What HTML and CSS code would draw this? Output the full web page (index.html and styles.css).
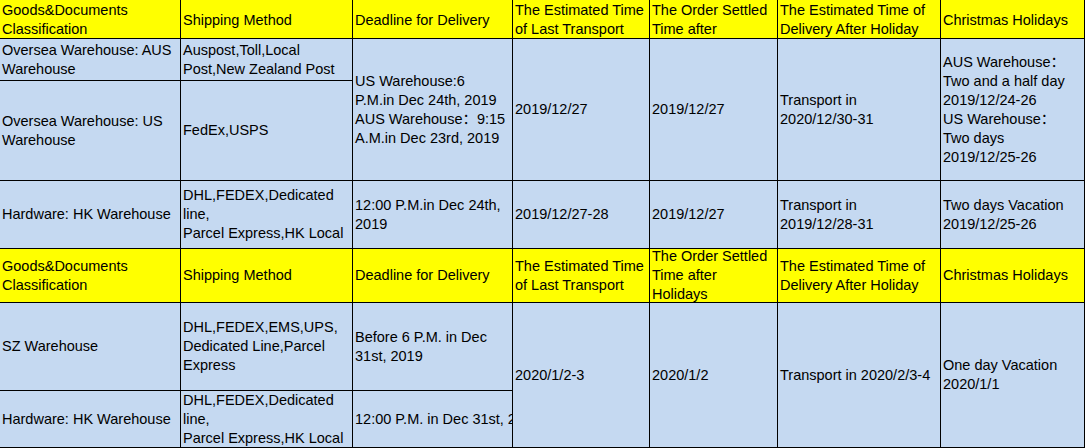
FILE: index.html
```html
<!DOCTYPE html>
<html lang="en">
<head>
  <meta charset="UTF-8">
  <title>Christmas Holiday Shipping Schedule</title>
  <link rel="stylesheet" href="styles.css">
</head>
<body>
  <div class="sheet">
    <!-- header 1 -->
    <div class="cell head first">Goods&amp;Documents<br>Classification</div>
    <div class="cell head first">Shipping Method</div>
    <div class="cell head first">Deadline for Delivery</div>
    <div class="cell head first">The Estimated Time<br>of Last Transport</div>
    <div class="cell head first">The Order Settled<br>Time after</div>
    <div class="cell head first">The Estimated Time of<br>Delivery After Holiday</div>
    <div class="cell head first">Christmas Holidays</div>

    <!-- overseas warehouses -->
    <div class="cell">Oversea Warehouse: AUS<br>Warehouse</div>
    <div class="cell">Auspost,Toll,Local<br>Post,New Zealand Post</div>
    <div class="cell span2">US Warehouse:6<br>P.M.in Dec 24th, 2019<br>AUS Warehouse：9:15<br>A.M.in Dec 23rd, 2019</div>
    <div class="cell span2">2019/12/27</div>
    <div class="cell span2">2019/12/27</div>
    <div class="cell span2">Transport in<br>2020/12/30-31</div>
    <div class="cell span2">AUS Warehouse：<br>Two and a half day<br>2019/12/24-26<br>US Warehouse：<br>Two days<br>2019/12/25-26</div>
    <div class="cell">Oversea Warehouse: US<br>Warehouse</div>
    <div class="cell">FedEx,USPS</div>

    <!-- hk -->
    <div class="cell">Hardware: HK Warehouse</div>
    <div class="cell">DHL,FEDEX,Dedicated<br>line,<br>Parcel Express,HK Local</div>
    <div class="cell">12:00 P.M.in Dec 24th,<br>2019</div>
    <div class="cell">2019/12/27-28</div>
    <div class="cell">2019/12/27</div>
    <div class="cell">Transport in<br>2019/12/28-31</div>
    <div class="cell">Two days Vacation<br>2019/12/25-26</div>

    <!-- header 2 -->
    <div class="cell head">Goods&amp;Documents<br>Classification</div>
    <div class="cell head">Shipping Method</div>
    <div class="cell head">Deadline for Delivery</div>
    <div class="cell head">The Estimated Time<br>of Last Transport</div>
    <div class="cell head">The Order Settled<br>Time after<br>Holidays</div>
    <div class="cell head">The Estimated Time of<br>Delivery After Holiday</div>
    <div class="cell head">Christmas Holidays</div>

    <!-- new year -->
    <div class="cell">SZ Warehouse</div>
    <div class="cell">DHL,FEDEX,EMS,UPS,<br>Dedicated Line,Parcel<br>Express</div>
    <div class="cell">Before 6 P.M. in Dec<br>31st, 2019</div>
    <div class="cell span2">2020/1/2-3</div>
    <div class="cell span2">2020/1/2</div>
    <div class="cell span2">Transport in 2020/2/3-4</div>
    <div class="cell span2">One day Vacation<br>2020/1/1</div>
    <div class="cell">Hardware: HK Warehouse</div>
    <div class="cell">DHL,FEDEX,Dedicated<br>line,<br>Parcel Express,HK Local</div>
    <div class="cell">12:00 P.M. in Dec 31st, 2019</div>
  </div>
</body>
</html>
```

FILE: styles.css
```css
body {
  margin: 0;
  font-family: 'Liberation Sans', Arial, 'Noto Sans CJK SC', sans-serif;
  font-size: 14.5px;
  line-height: 19px;
  color: #000;
  background-color: #fff;
}

.sheet {
  display: grid;
  grid-template-columns: 180px 171px 159px 136px 127px 162px 143px;
  grid-template-rows: 38px 41px 99px 67px 53px 87px 56px;
  gap: 1px;
  width: fit-content;
  padding: 0 1px 1px 0;
  background-color: #000;
}

.cell {
  display: flex;
  align-items: center;
  padding: 0 2px;
  background-color: #c5d9f1;
  white-space: nowrap;
  overflow: hidden;
}

.head {
  background-color: #ffff00;
}

.head.first {
  padding-top: 2px;
}

.span2 {
  grid-row: span 2;
}
```
